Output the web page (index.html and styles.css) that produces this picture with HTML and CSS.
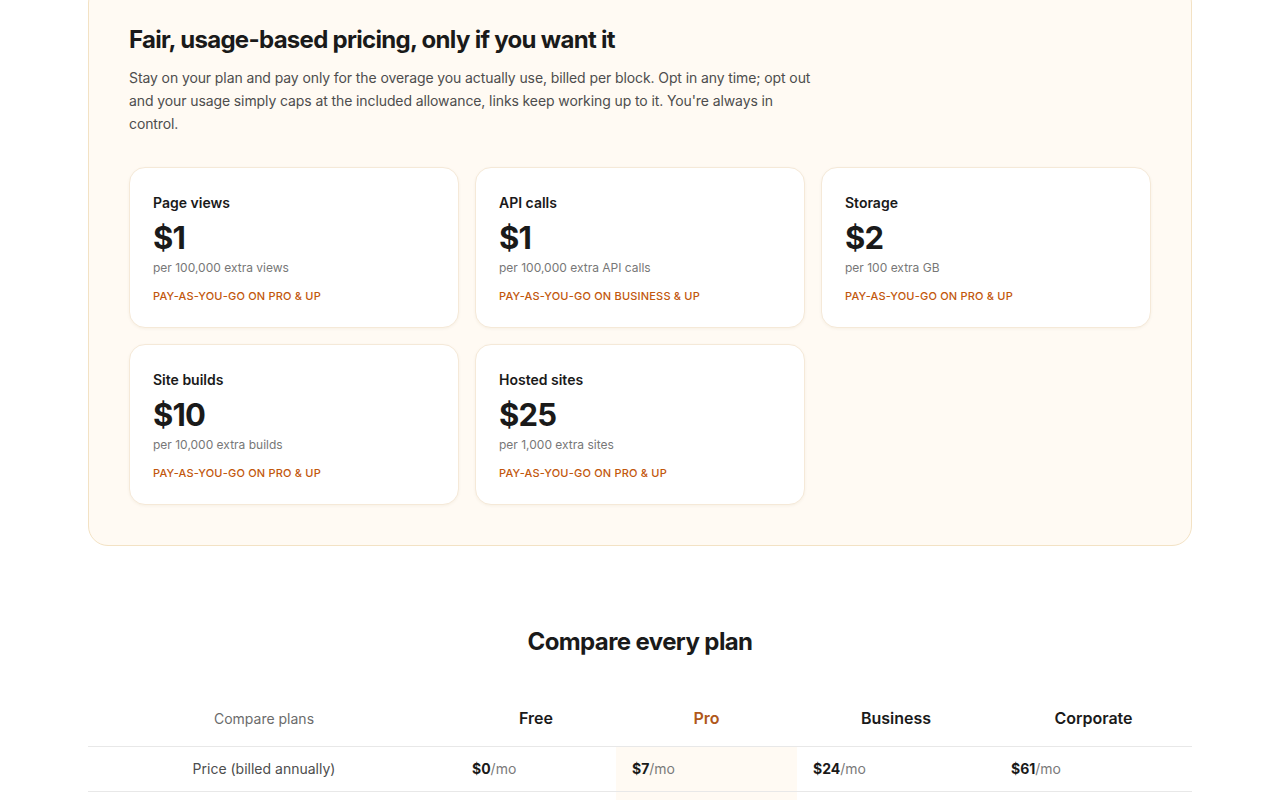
FILE: index.html
```html
<!DOCTYPE html>
<html lang="en">
<head>
<meta charset="UTF-8">
<meta name="viewport" content="width=device-width, initial-scale=1.0">
<title>Pricing</title>
<link rel="stylesheet" href="styles.css">
</head>
<body>

<main class="page">
    <section class="usage">
        <h2 class="usage-title">Fair, usage-based pricing, only if you want it</h2>
        <p class="usage-text">Stay on your plan and pay only for the overage you actually use, billed per block. Opt in any time; opt out and your usage simply caps at the included allowance, links keep working up to it. You're always in control.</p>

        <div class="usage-grid">
            <div class="usage-card">
                <div class="card-name">Page views</div>
                <div class="card-price">$1</div>
                <div class="card-unit">per 100,000 extra views</div>
                <div class="card-tag">Pay-as-you-go on Pro &amp; up</div>
            </div>
            <div class="usage-card">
                <div class="card-name">API calls</div>
                <div class="card-price">$1</div>
                <div class="card-unit">per 100,000 extra API calls</div>
                <div class="card-tag">Pay-as-you-go on Business &amp; up</div>
            </div>
            <div class="usage-card">
                <div class="card-name">Storage</div>
                <div class="card-price">$2</div>
                <div class="card-unit">per 100 extra GB</div>
                <div class="card-tag">Pay-as-you-go on Pro &amp; up</div>
            </div>
            <div class="usage-card">
                <div class="card-name">Site builds</div>
                <div class="card-price">$10</div>
                <div class="card-unit">per 10,000 extra builds</div>
                <div class="card-tag">Pay-as-you-go on Pro &amp; up</div>
            </div>
            <div class="usage-card">
                <div class="card-name">Hosted sites</div>
                <div class="card-price">$25</div>
                <div class="card-unit">per 1,000 extra sites</div>
                <div class="card-tag">Pay-as-you-go on Pro &amp; up</div>
            </div>
        </div>
    </section>

    <section class="compare">
        <h2 class="compare-title">Compare every plan</h2>

        <div class="compare-table">
            <div class="cell head label">Compare plans</div>
            <div class="cell head col-free">Free</div>
            <div class="cell head col-pro">Pro</div>
            <div class="cell head">Business</div>
            <div class="cell head">Corporate</div>

            <div class="cell label">Price (billed annually)</div>
            <div class="cell value col-free"><b>$0</b><span>/mo</span></div>
            <div class="cell value col-pro"><b>$7</b><span>/mo</span></div>
            <div class="cell value"><b>$24</b><span>/mo</span></div>
            <div class="cell value"><b>$61</b><span>/mo</span></div>

            <div class="cell label">&nbsp;</div>
            <div class="cell value col-free">&nbsp;</div>
            <div class="cell value col-pro">&nbsp;</div>
            <div class="cell value">&nbsp;</div>
            <div class="cell value">&nbsp;</div>
        </div>
    </section>
</main>

</body>
</html>
```

FILE: styles.css
```css
body {
    margin: 0;
    font-family: Inter, "Noto Sans", Arial, sans-serif;
    color: #1a1a1a;
    background: #fff;
}

.page {
    width: 1104px;
    margin: 0 auto;
}

/* usage-based pricing block */
.usage {
    margin-top: -17px;
    padding: 40px;
    background-color: #fffaf3;
    border: 1px solid #f3e2c4;
    border-radius: 20px;
}

.usage-title {
    margin: 0 0 10px;
    font-size: 24px;
    line-height: 32px;
    font-weight: 700;
    letter-spacing: -0.7px;
}

.usage-text {
    margin: 0;
    max-width: 692px;
    font-size: 14px;
    line-height: 23px;
    color: #4d4d4d;
    letter-spacing: -0.1px;
}

.usage-grid {
    display: grid;
    grid-template-columns: repeat(3, 1fr);
    gap: 16px;
    margin-top: 32px;
}

.usage-card {
    background: #fff;
    border: 1px solid #f5e9d8;
    border-radius: 16px;
    padding: 25px 23px 23px;
    box-shadow: 0 1px 3px rgba(120, 80, 20, 0.06);
}

.card-name {
    font-size: 14px;
    line-height: 20px;
    font-weight: 600;
}

.card-price {
    margin-top: 6px;
    font-size: 31px;
    line-height: 38px;
    font-weight: 700;
    letter-spacing: -0.8px;
}

.card-unit {
    margin-top: 3px;
    font-size: 12px;
    line-height: 16px;
    color: #777;
}

.card-tag {
    margin-top: 12px;
    font-size: 11px;
    line-height: 16px;
    font-weight: 500;
    color: #c2570c;
    text-transform: uppercase;
    letter-spacing: 0.2px;
}

/* plan comparison table */
.compare {
    margin-top: 80px;
}

.compare-title {
    margin: 0;
    text-align: center;
    font-size: 24px;
    line-height: 32px;
    font-weight: 700;
    letter-spacing: -0.6px;
}

.compare-table {
    display: grid;
    grid-template-columns: 352px 176px 181px 198px 197px;
    margin-top: 33px;
}

.cell {
    padding: 12px 16px;
    font-size: 14px;
    line-height: 20px;
    border-bottom: 1px solid #e8e8e8;
}

.cell.head {
    padding: 16px;
    font-size: 16px;
    line-height: 23px;
    font-weight: 600;
    text-align: center;
}

.cell.head.label {
    font-size: 14px;
    font-weight: 400;
    color: #6b6b6b;
}

.cell.head.col-pro {
    color: #b0581a;
}

.cell.label {
    text-align: center;
    color: #4d4d4d;
}

.cell.col-free {
    padding-left: 32px;
}

.cell.value.col-pro {
    background-color: #fffaf3;
}

.value b {
    font-weight: 700;
}

.value span {
    color: #7a7a7a;
}
```
